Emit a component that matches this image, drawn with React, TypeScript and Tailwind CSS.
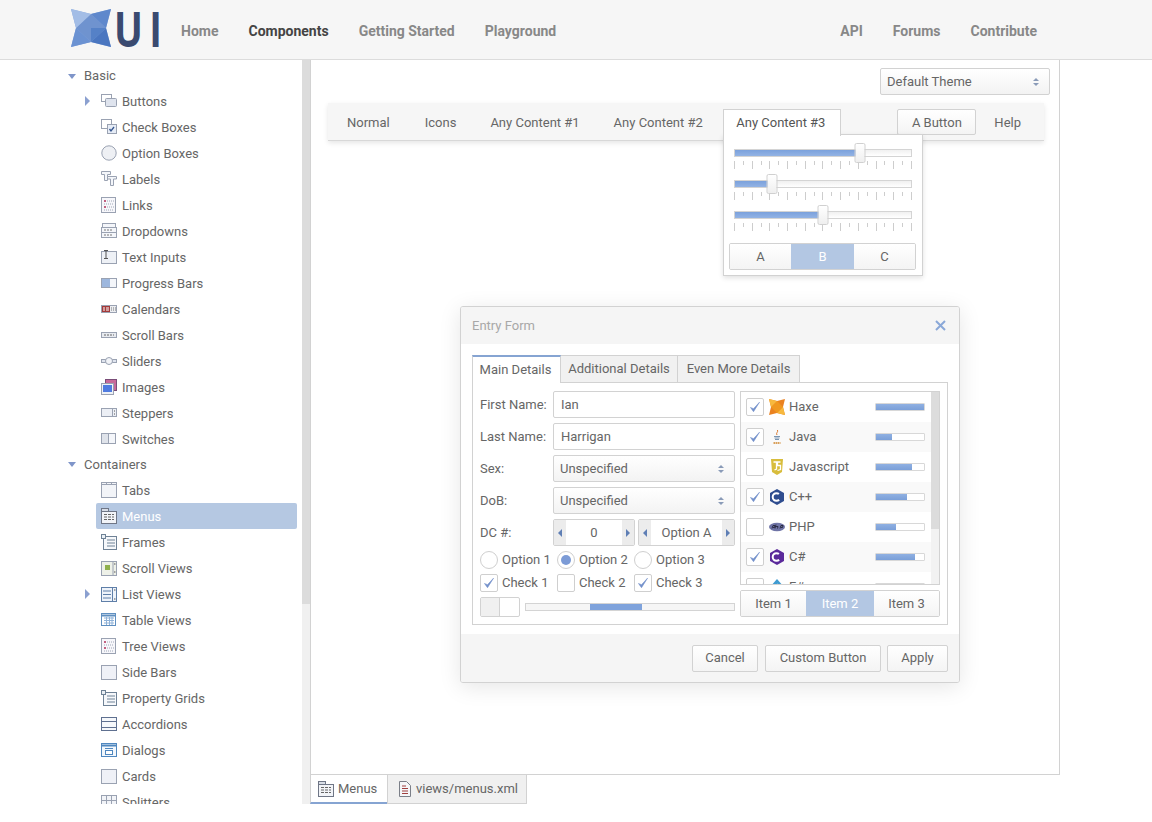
import React from 'react'

const basicItems = ['Buttons', 'Check Boxes', 'Option Boxes', 'Labels', 'Links', 'Dropdowns', 'Text Inputs', 'Progress Bars', 'Calendars', 'Scroll Bars', 'Sliders', 'Images', 'Steppers', 'Switches']
const containerItems = ['Tabs', 'Menus', 'Frames', 'Scroll Views', 'List Views', 'Table Views', 'Tree Views', 'Side Bars', 'Property Grids', 'Accordions', 'Dialogs', 'Cards', 'Splitters']
const withArrow = ['Buttons', 'List Views']

const languages = [
  { name: 'Haxe', checked: true, value: 100 },
  { name: 'Java', checked: true, value: 33 },
  { name: 'Javascript', checked: false, value: 75 },
  { name: 'C++', checked: true, value: 65 },
  { name: 'PHP', checked: false, value: 42 },
  { name: 'C#', checked: true, value: 81 },
  { name: 'F#', checked: false, value: 50 },
]

const ticks = Array.from({ length: 21 }, (_, i) => i)

function TreeIcon({ name }: { name: string }) {
  const line = '#9aa2b2'
  let body = <rect x="0.5" y="1.5" width="15" height="13" fill="#f4f6fa" stroke={line} />
  switch (name) {
    case 'Buttons':
      body = <g><rect x="0.5" y="1.5" width="10" height="7" fill="#fff" stroke={line} /><rect x="4.5" y="5.5" width="11" height="8" rx="1" fill="#dfe4ee" stroke={line} /></g>
      break
    case 'Check Boxes':
      body = <g><rect x="0.5" y="0.5" width="10" height="9" fill="#fff" stroke={line} /><rect x="6.5" y="5.5" width="9" height="9" fill="#e6ecf6" stroke={line} /><path d="M8.5 10l1.5 2 3-4" fill="none" stroke="#34558f" strokeWidth="1.3" /></g>
      break
    case 'Option Boxes':
      body = <circle cx="8" cy="8" r="7.2" fill="#eef0f4" stroke={line} />
      break
    case 'Labels':
      body = <g fill="#f4f6fa" stroke={line}><path d="M0.5 0.5h9v3h-3v6h-3v-6h-3z" /><path d="M6.5 5.5h9v2.5h-3v6.5h-3v-6.5h-3z" /></g>
      break
    case 'Links':
    case 'Tree Views':
      body = <g><rect x="0.5" y="0.5" width="14" height="15" fill="#f7f7fb" stroke={line} /><path d="M3 4h2M3 10h2" stroke="#b0305a" strokeWidth="1.4" /><path d="M6 4h7M3 7h10M6 10h7M3 13h10" stroke="#a0a8b8" strokeDasharray="1 1" /></g>
      break
    case 'Dropdowns':
      body = <g fill="#f4f6fa" stroke={line}><rect x="1.5" y="0.5" width="13" height="4" /><rect x="0.5" y="4.5" width="15" height="5" /><rect x="0.5" y="9.5" width="15" height="5" /><path d="M3 7h8M3 12h8" stroke="#777" strokeDasharray="2 1" /></g>
      break
    case 'Text Inputs':
      body = <g><rect x="0.5" y="2.5" width="15" height="12" fill="#eef1f6" stroke={line} /><path d="M3 1.5h4M5 1.5v8M3 9.5h4" stroke="#555" fill="none" /></g>
      break
    case 'Progress Bars':
      body = <g><rect x="0.5" y="3.5" width="15" height="9" fill="#f4f6fa" stroke={line} /><rect x="1" y="4" width="8" height="8" fill="#9db7de" /></g>
      break
    case 'Calendars':
      body = <g><rect x="0.5" y="4.5" width="15" height="7" fill="#eceef2" stroke={line} /><rect x="1" y="5" width="8" height="6" fill="#a33a3a" /><path d="M2 7h2M5 7h3M2 9h2M5 9h3" stroke="#fff" /><path d="M10 7h5M10 9h5" stroke="#777" strokeDasharray="1 1" /></g>
      break
    case 'Scroll Bars':
      body = <g><rect x="0.5" y="5.5" width="15" height="5" fill="#e8ebf0" stroke={line} /><path d="M3 8h10" stroke="#666" strokeDasharray="2 1" /></g>
      break
    case 'Sliders':
      body = <g><rect x="0.5" y="6.5" width="15" height="3" fill="#dfe4ee" stroke={line} /><circle cx="8" cy="8" r="3.5" fill="#f2f4f8" stroke={line} /></g>
      break
    case 'Images':
      body = <g><rect x="4.5" y="0.5" width="11" height="11" fill="#c7699a" stroke="#7a4d78" /><rect x="0.5" y="4.5" width="12" height="11" fill="#eef1f6" stroke={line} /><rect x="2" y="6" width="9" height="7" fill="#4f7be0" /></g>
      break
    case 'Steppers':
      body = <g><rect x="0.5" y="3.5" width="15" height="8" fill="#eceff5" stroke={line} /><path d="M11.5 3.5v8" stroke={line} /><path d="M13 6h1M13 9h1" stroke="#555" /></g>
      break
    case 'Switches':
      body = <g><rect x="0.5" y="2.5" width="14" height="10" fill="#f4f6fa" stroke={line} /><rect x="1" y="3" width="6.5" height="9" fill="#dfe3ea" /><path d="M7.5 2.5v10" stroke={line} /></g>
      break
    case 'Tabs':
      body = <g><rect x="0.5" y="0.5" width="15" height="15" fill="#f2f4f8" stroke={line} /><path d="M0.5 2.5h15M5.5 0.5v2M10.5 0.5v2" stroke={line} /></g>
      break
    case 'Menus':
      body = <g><rect x="0.5" y="0.5" width="7" height="3" fill="#d8dde6" stroke="#6f7686" /><rect x="0.5" y="3.5" width="15" height="12" fill="#f2f4f8" stroke="#6f7686" /><path d="M3 6.5h10M3 9h10M3 11.5h10" stroke="#666" strokeDasharray="3 1" /></g>
      break
    case 'Frames':
    case 'Property Grids':
      body = <g><rect x="2.5" y="2.5" width="13" height="13" fill="#f6f8fb" stroke="#6f8296" /><rect x="0.5" y="0.5" width="4" height="4" fill="#eaf0f5" stroke="#6f8296" /><path d="M6 6h8M6 9h8M6 12h8" stroke="#6f8296" /></g>
      break
    case 'Scroll Views':
      body = <g><rect x="0.5" y="1.5" width="15" height="14" fill="#eef1e8" stroke={line} /><path d="M12 1.5v14" stroke={line} /><rect x="4" y="5" width="5" height="5" fill="#8fb04d" /><path d="M13 4h1.5M13 12h1.5" stroke="#555" /></g>
      break
    case 'List Views':
      body = <g><rect x="0.5" y="1.5" width="15" height="14" fill="#eef3fa" stroke="#5f7fa8" /><path d="M11.5 1.5v14" stroke="#5f7fa8" /><path d="M2 5h8M2 8.5h8M2 12h8" stroke="#5f7fa8" /><path d="M13 4h1.5M13 13h1.5" stroke="#555" /></g>
      break
    case 'Table Views':
      body = <g><rect x="0.5" y="1.5" width="14" height="12" fill="#fff" stroke="#5f8fc0" /><path d="M1 3.5h13" stroke="#5f8fc0" strokeWidth="2" /><path d="M3 6h10M3 8.5h10M3 11h10M5.5 5v8M8.5 5v8M11 5v8" stroke="#8fb2d8" /></g>
      break
    case 'Side Bars':
    case 'Cards':
      body = <rect x="0.5" y="1.5" width="15" height="14" fill="#eff1f7" stroke={line} />
      break
    case 'Accordions':
      body = <g fill="#f6f8fb" stroke="#5f7090"><rect x="0.5" y="1.5" width="15" height="4" /><rect x="0.5" y="5.5" width="15" height="6" /><rect x="0.5" y="11.5" width="15" height="3" /></g>
      break
    case 'Dialogs':
      body = <g><rect x="0.5" y="1.5" width="15" height="13" fill="#f2f7fc" stroke="#4f87bf" /><path d="M1 3.5h14" stroke="#4f87bf" strokeWidth="2" /><rect x="4.5" y="8.5" width="7" height="4" fill="#fff" stroke="#4f87bf" /><path d="M4 6.5h8" stroke="#4f87bf" /></g>
      break
    case 'Splitters':
      body = <g><rect x="0.5" y="1.5" width="15" height="14" fill="#f2f4f8" stroke={line} /><path d="M5.5 1.5v14M10.5 1.5v14M0.5 6.5h15" stroke={line} /></g>
      break
  }
  return <svg width="16" height="16" viewBox="0 0 16 16" className="shrink-0">{body}</svg>
}

function TreeRow({ label }: { label: string }) {
  const selected = label === 'Menus'
  return (
    <div className="flex h-[26px] items-center pl-[85px]">
      <div className="flex w-[11px] justify-start">
        {withArrow.includes(label) && <div className="h-0 w-0 border-y-[5px] border-l-[5px] border-y-transparent border-l-[#8ba0d0]" />}
      </div>
      <div className={`flex h-[26px] w-[201px] items-center gap-[5px] rounded-[2px] pl-[5px] ${selected ? 'bg-[#b5c8e2] text-white' : ''}`}>
        <TreeIcon name={label} />
        <span className="pt-[2px]">{label}</span>
      </div>
    </div>
  )
}

function TreeGroup({ label, height }: { label: string; height: string }) {
  return (
    <div className={`flex items-center gap-[8px] pl-[68px] ${height}`}>
      <div className="h-0 w-0 border-x-[4.5px] border-t-[5px] border-x-transparent border-t-[#7f95c9]" />
      <span>{label}</span>
    </div>
  )
}

function UpDown() {
  return (
    <div className="flex flex-col gap-[2px]">
      <div className="h-0 w-0 border-x-[3px] border-b-[3px] border-x-transparent border-b-[#8a9bb8]" />
      <div className="h-0 w-0 border-x-[3px] border-t-[3px] border-x-transparent border-t-[#8a9bb8]" />
    </div>
  )
}

function Select({ label, className }: { label: string; className: string }) {
  return (
    <div className={`flex h-[27px] items-center justify-between rounded-[2px] border border-[#d2d2d2] bg-linear-to-b from-white to-[#f3f3f3] pl-[6px] pr-[10px] ${className}`}>
      <span>{label}</span>
      <UpDown />
    </div>
  )
}

function Slider({ value }: { value: number }) {
  return (
    <div className="h-[31px] w-[178px]">
      <div className="relative mt-[3px] h-[8px] border border-[#d4d4d4] bg-linear-to-b from-[#f0f0f0] to-white">
        <div className="h-full bg-linear-to-b from-[#7ba1dc] to-[#93b3e4]" style={{ width: `${value}%` }} />
        <div className="absolute top-[-7px] h-[20px] w-[11px] -translate-x-1/2 rounded-[2px] border border-[#d0d0d0] bg-linear-to-b from-white to-[#efefef]" style={{ left: `${value}%` }} />
      </div>
      <div className="mt-[4px] flex justify-between">
        {ticks.map((t) => (
          <div key={t} className={`w-px bg-[#cdcdcd] ${t % 2 === 0 ? 'h-[8px]' : 'h-[4px]'}`} />
        ))}
      </div>
    </div>
  )
}

function ButtonBar({ items, widths, className }: { items: string[]; widths: string[]; className: string }) {
  return (
    <div className={`flex h-[27px] overflow-hidden rounded-[2px] border border-[#d2d2d2] ${className}`}>
      {items.map((item, i) => (
        <div key={item} className={`flex items-center justify-center ${widths[i]} ${i === 1 ? 'bg-[#b3c7e3] text-white' : 'bg-linear-to-b from-white to-[#f4f4f4]'}`}>
          {item}
        </div>
      ))}
    </div>
  )
}

function Check({ checked }: { checked: boolean }) {
  return (
    <div className="flex h-[18px] w-[18px] shrink-0 items-center justify-center rounded-[2px] border border-[#cfcfcf] bg-white">
      {checked && (
        <svg width="14" height="14" viewBox="0 0 14 14">
          <path d="M2.5 7.5l3 4.2 6-9.5-6 6.5z" fill="#7391cb" stroke="#7391cb" strokeWidth="0.6" strokeLinejoin="round" />
        </svg>
      )}
    </div>
  )
}

function Radio({ selected, label }: { selected: boolean; label: string }) {
  return (
    <div className="flex w-[77px] items-center gap-[4px]">
      <div className="flex h-[18px] w-[18px] shrink-0 items-center justify-center rounded-full border border-[#cfcfcf] bg-white">
        {selected && <div className="h-[10px] w-[10px] rounded-full bg-[#7c9bd6]" />}
      </div>
      <span>{label}</span>
    </div>
  )
}

function Stepper({ label, className }: { label: string; className: string }) {
  return (
    <div className={`flex h-[27px] items-stretch overflow-hidden rounded-[2px] border border-[#d2d2d2] ${className}`}>
      <div className="flex w-[12px] items-center justify-center bg-[#ececec]">
        <div className="h-0 w-0 border-y-[4px] border-r-[4px] border-y-transparent border-r-[#5f7fb5]" />
      </div>
      <div className="flex flex-1 items-center justify-center bg-white">{label}</div>
      <div className="flex w-[12px] items-center justify-center bg-[#ececec]">
        <div className="h-0 w-0 border-y-[4px] border-l-[4px] border-y-transparent border-l-[#5f7fb5]" />
      </div>
    </div>
  )
}

function LangIcon({ name }: { name: string }) {
  switch (name) {
    case 'Haxe':
      return (
        <svg width="16" height="16" viewBox="0 0 16 16">
          <path d="M0 0l8 2 8-2-2 8 2 8-8-2-8 2 2-8z" fill="#ea8220" />
          <path d="M8 2l6 6-6 6-6-6z" fill="#f0981f" />
          <path d="M0 0l8 2-6 6zM16 16l-8-2 6-6z" fill="#f7b93e" />
        </svg>
      )
    case 'Java':
      return (
        <svg width="16" height="16" viewBox="0 0 16 16">
          <path d="M8.5 1c1 2-2 3-.5 5" fill="none" stroke="#d9772b" />
          <path d="M5 7.5h6M5.5 9h5M6 10.5h4" stroke="#7a94b0" />
          <path d="M4.5 14h7" stroke="#d9a05b" strokeWidth="2" strokeDasharray="1.5 .5" />
        </svg>
      )
    case 'Javascript':
      return (
        <svg width="16" height="16" viewBox="0 0 16 16">
          <path d="M2 0h12l-1 13-5 3-5-3z" fill="#d8bd3c" />
          <path d="M4.5 3h3v7l-2 1M11.5 3h-3v3.5h3v4l-3 1" fill="none" stroke="#fff" strokeWidth="1.3" />
        </svg>
      )
    case 'C++':
    case 'C#':
      return (
        <svg width="16" height="16" viewBox="0 0 16 16">
          <path d="M8 0l7 4v8l-7 4-7-4V4z" fill={name === 'C++' ? '#2f4d8f' : '#5b2a9b'} />
          <circle cx="7.5" cy="8" r="3.8" fill="none" stroke="#fff" strokeWidth="2" strokeDasharray="17 7" strokeDashoffset="-3" />
        </svg>
      )
    case 'PHP':
      return (
        <svg width="16" height="16" viewBox="0 0 16 16">
          <ellipse cx="8" cy="8" rx="8" ry="4.2" fill="#6f74a6" />
          <path d="M3 9.5l1-3h2l-.5 2H4M7 5.5l-1 4M7 7.5h2l-.5 2M11 9.5l1-3h2l-.5 2H12" fill="none" stroke="#1c1c30" strokeWidth="0.8" />
        </svg>
      )
    default:
      return (
        <svg width="16" height="16" viewBox="0 0 16 16">
          <path d="M8 0l7 8-7 8-7-8z" fill="#3f9bd1" />
          <path d="M8 4l3.5 4-3.5 4z" fill="#7cc5e8" />
        </svg>
      )
  }
}

function FileIcon({ kind }: { kind: string }) {
  if (kind === 'menu') return <TreeIcon name="Menus" />
  return (
    <svg width="14" height="16" viewBox="0 0 14 16" className="shrink-0">
      <path d="M1.5 0.5h7l4 4v11h-11z" fill="#f5f6f8" stroke="#7b7f88" />
      <path d="M4 5h4M4 7.5h6M4 10h6M4 12.5h6" stroke="#a04040" />
    </svg>
  )
}

export default function App() {
  return (
    <div className="h-[822px] w-[1152px] overflow-hidden bg-white font-['Roboto',sans-serif] text-[13px] text-[#666]">
      <header className="flex h-[60px] items-center border-b border-[#dcdcdc] bg-[#f6f6f6] pl-[70px] text-[14px] font-bold text-[#888]">
        <div className="flex h-[60px] w-[111px] shrink-0 items-center pb-[3px]">
          <svg width="42" height="40" viewBox="0 0 42 40" className="shrink-0">
            <path d="M1 1l20 5 20-5-5 19 5 19-20-5-20 5 5-19z" fill="#8aa8dc" />
            <path d="M21 6l15 14-15 14-15-14z" fill="#6f93cf" />
            <path d="M41 1l-5 19-15-14z" fill="#5f88cc" />
            <path d="M41 39l-20-5 15-14z" fill="#4a76c0" />
            <path d="M21 20l15 0-15 14z" fill="#5581c7" />
            <path d="M1 39l5-19 15 14z" fill="#6b92d2" />
            <path d="M1 1l20 5-15 14z" fill="#a3bde6" />
          </svg>
          <span className="ml-[2px] origin-left scale-x-[0.78] font-['Open_Sans',sans-serif] text-[49px] leading-none font-bold tracking-[8px] text-[#3a4a70]">UI</span>
        </div>
        <nav className="flex gap-[30px] pt-[4px]">
          <span>Home</span>
          <span className="text-[#444]">Components</span>
          <span>Getting Started</span>
          <span>Playground</span>
        </nav>
        <nav className="ml-auto flex gap-[30px] pt-[4px] pr-[115px]">
          <span>API</span>
          <span>Forums</span>
          <span>Contribute</span>
        </nav>
      </header>

      <div className="flex h-[744px]">
        <aside className="h-full w-[302px] shrink-0 overflow-hidden pt-[2px]">
          <TreeGroup label="Basic" height="h-[26px] pt-[2px]" />
          {basicItems.map((item) => <TreeRow key={item} label={item} />)}
          <TreeGroup label="Containers" height="h-[25px]" />
          {containerItems.map((item) => <TreeRow key={item} label={item} />)}
        </aside>
        <div className="h-full w-[8px] shrink-0 bg-[#f0f0f0]">
          <div className="h-[544px] bg-[#dcdcdc]" />
        </div>

        <main className="flex w-[750px] flex-col">
          <div className="relative h-[715px] border-x border-b border-[#d2d2d2]">
            <div className="flex justify-end pt-[8px] pr-[9px]">
              <Select label="Default Theme" className="w-[170px]" />
            </div>
            <div className="relative mt-[8px] ml-[17px] flex h-[38px] w-[716px] items-start border-b border-[#d8d8d8] bg-[#f6f6f6] pt-[6px] pl-[2px] shadow-[0_2px_5px_rgba(0,0,0,0.1)]">
              {['Normal', 'Icons', 'Any Content #1', 'Any Content #2'].map((t, i) => (
                <div key={t} className={`flex h-[26px] items-center px-[17px] pt-[2px] ${i === 0 ? 'mr-[1px]' : ''}`}>{t}</div>
              ))}
              <div className="relative z-20 ml-[3px] flex h-[27px] w-[118px] items-center justify-center border-x border-t border-[#d2d2d2] bg-white pr-[2px] text-[#555]">Any Content #3</div>
              <div className="ml-auto flex h-[26px] w-[79px] items-center justify-center rounded-[2px] border border-[#d2d2d2] bg-linear-to-b from-white to-[#f4f4f4] pt-[2px]">A Button</div>
              <div className="ml-[18px] mr-[23px] flex h-[26px] items-center pt-[2px]">Help</div>
            </div>

            <div className="absolute top-[74px] left-[412px] z-10 flex h-[142px] w-[200px] flex-col items-center border border-[#d2d2d2] bg-white pt-[11px] shadow-[0_2px_5px_rgba(0,0,0,0.12)]">
              <Slider value={71} />
              <Slider value={21} />
              <Slider value={50} />
              <ButtonBar items={['A', 'B', 'C']} widths={['w-[61px]', 'w-[63px]', 'flex-1']} className="mt-[4px] w-[187px] self-start ml-[5px]" />
            </div>

            <div className="absolute top-[246px] left-[149px] flex h-[377px] w-[500px] flex-col overflow-hidden rounded-[3px] border border-[#d2d2d2] bg-white shadow-[0_4px_22px_rgba(0,0,0,0.1)]">
              <div className="flex h-[37px] shrink-0 items-center justify-between bg-[#f5f5f5] pr-[13px] pl-[11px] text-[#a8a8a8]">
                <span>Entry Form</span>
                <svg width="11" height="11" viewBox="0 0 11 11">
                  <path d="M1 1l9 9M10 1l-9 9" stroke="#8aa8d8" strokeWidth="2" />
                </svg>
              </div>
              <div className="flex-1 px-[11px] pt-[11px]">
                <div className="flex h-[28px] items-stretch">
                  <div className="flex w-[89px] items-center justify-center border-x border-t-2 border-x-[#d2d2d2] border-t-[#86a4d2] bg-white pr-[2px]">Main Details</div>
                  <div className="flex w-[117px] items-center justify-center border-t border-r border-b border-[#d2d2d2] bg-[#f1f1f1]">Additional Details</div>
                  <div className="flex w-[122px] items-center justify-center border-t border-r border-b border-[#d2d2d2] bg-[#f1f1f1]">Even More Details</div>
                  <div className="flex-1 border-b border-[#d2d2d2]" />
                </div>
                <div className="flex h-[242px] w-[476px] gap-[5px] border-x border-b border-[#d2d2d2] px-[7px] pt-[8px]">
                  <div className="flex w-[255px] flex-col gap-[5px]">
                    <div className="flex items-center">
                      <span className="w-[73px]">First Name:</span>
                      <div className="flex h-[27px] w-[182px] items-center rounded-[2px] border border-[#d2d2d2] pl-[7px]">Ian</div>
                    </div>
                    <div className="flex items-center">
                      <span className="w-[73px]">Last Name:</span>
                      <div className="flex h-[27px] w-[182px] items-center rounded-[2px] border border-[#d2d2d2] pl-[7px]">Harrigan</div>
                    </div>
                    <div className="flex items-center">
                      <span className="w-[73px]">Sex:</span>
                      <Select label="Unspecified" className="w-[182px]" />
                    </div>
                    <div className="flex items-center">
                      <span className="w-[73px]">DoB:</span>
                      <Select label="Unspecified" className="w-[182px]" />
                    </div>
                    <div className="flex items-center">
                      <span className="w-[73px]">DC #:</span>
                      <Stepper label="0" className="w-[82px]" />
                      <Stepper label="Option A" className="ml-[3px] w-[97px]" />
                    </div>
                    <div className="flex h-[18px] items-center">
                      <Radio selected={false} label="Option 1" />
                      <Radio selected={true} label="Option 2" />
                      <Radio selected={false} label="Option 3" />
                    </div>
                    <div className="flex h-[18px] items-center">
                      {[['Check 1', true], ['Check 2', false], ['Check 3', true]].map(([label, on]) => (
                        <div key={label as string} className="flex w-[77px] items-center gap-[4px]">
                          <Check checked={on as boolean} />
                          <span>{label}</span>
                        </div>
                      ))}
                    </div>
                    <div className="flex h-[20px] items-center gap-[5px]">
                      <div className="flex h-[20px] w-[40px] rounded-[2px] border border-[#d2d2d2]">
                        <div className="w-[19px] border-r border-[#d2d2d2] bg-[#f0f0f0]" />
                      </div>
                      <div className="h-[8px] w-[210px] border border-[#d4d4d4] bg-[#f6f6f6] pl-[64px]">
                        <div className="h-full w-[52px] bg-[#7fa3dc]" />
                      </div>
                    </div>
                  </div>

                  <div className="flex w-[200px] flex-col gap-[5px]">
                    <div className="flex h-[194px] overflow-hidden border border-[#d2d2d2]">
                      <div className="flex-1">
                        {languages.map((lang, i) => (
                          <div key={lang.name} className={`flex h-[30px] items-center pr-[6px] pl-[5px] ${i % 2 === 1 ? 'bg-[#f9f9f9]' : ''}`}>
                            <Check checked={lang.checked} />
                            <div className="ml-[5px] w-[16px]"><LangIcon name={lang.name} /></div>
                            <span className="ml-[4px]">{lang.name}</span>
                            <div className="ml-auto h-[8px] w-[50px] overflow-hidden rounded-[1px] border border-[#d8d8d8] bg-white">
                              <div className="h-full bg-linear-to-b from-[#8fb0e2] to-[#7a9fd8]" style={{ width: `${lang.value}%` }} />
                            </div>
                          </div>
                        ))}
                      </div>
                      <div className="w-[8px] bg-[#f2f2f2]">
                        <div className="h-[137px] bg-[#dcdcdc]" />
                      </div>
                    </div>
                    <ButtonBar items={['Item 1', 'Item 2', 'Item 3']} widths={['w-[65px]', 'w-[68px]', 'flex-1']} className="w-[200px]" />
                  </div>
                </div>
              </div>
              <div className="flex h-[48px] shrink-0 items-center justify-end gap-[6px] bg-[#f5f5f5] pr-[11px]">
                {[['Cancel', 'mr-[1px] w-[66px]'], ['Custom Button', 'w-[116px]'], ['Apply', 'w-[61px]']].map(([label, w]) => (
                  <div key={label} className={`flex h-[27px] items-center justify-center rounded-[2px] border border-[#d2d2d2] bg-linear-to-b from-white to-[#f4f4f4] ${w}`}>{label}</div>
                ))}
              </div>
            </div>
          </div>

          <div className="flex h-[29px]">
            <div className="flex w-[77px] items-center gap-[4px] border-b-2 border-l border-b-[#86a4d2] border-l-[#d2d2d2] pl-[7px]">
              <FileIcon kind="menu" />
              <span>Menus</span>
            </div>
            <div className="flex w-[140px] items-center gap-[4px] border-x border-b border-[#d2d2d2] bg-[#f0f0f0] pl-[10px]">
              <FileIcon kind="xml" />
              <span>views/menus.xml</span>
            </div>
          </div>
        </main>
      </div>
    </div>
  )
}
